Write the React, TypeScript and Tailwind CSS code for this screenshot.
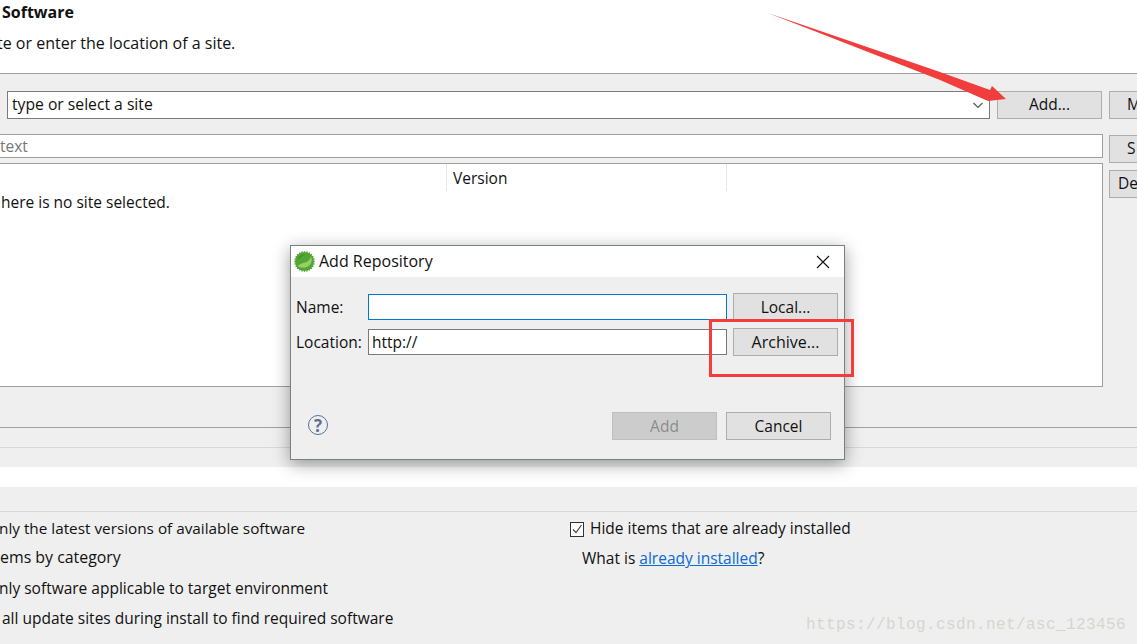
const font = "font-['Open_Sans','Noto_Sans',sans-serif]";

function Btn({ children, className = "" }: { children: React.ReactNode; className?: string }) {
  return (
    <div className={`h-[28px] shrink-0 flex items-center justify-center border border-[#adadad] bg-[#e1e1e1] text-[#111] whitespace-nowrap ${className}`}>
      {children}
    </div>
  );
}

function Logo() {
  const spikes = Array.from({ length: 24 }, (_, i) => i * 15);
  return (
    <svg width="21" height="21" viewBox="0 0 21 21">
      {spikes.map(a => (
        <rect key={a} x="9.8" y="0.200" width="1.400" height="3" fill="#4f9a34" transform={`rotate(${a} 10.5 10.5)`} />
      ))}
      <circle cx="10.5" cy="10.5" r="9.400" fill="#55a535" />
      <path d="M3.500 15c4 2.500 9.500 2.500 13-2 1.500-2 1.500-5 .5-7.500-1 3-3 5.500-6 6-3 .5-5 1.500-7.500 3.500z" fill="#93d263" />
      <path d="M3 9c1.500-3.500 5-6 9.500-6-3.500 1-6 3-9.500 6z" fill="#3f8a2a" />
    </svg>
  );
}

function Dialog() {
  return (
    <div className="absolute left-[290px] top-[245px] w-[555px] h-[215px] border border-[#76837a] bg-[#efefef] shadow-[0_4px_16px_rgba(0,0,0,0.38)] flex flex-col">
      <div className="h-[31px] bg-white flex items-center justify-between pl-[3px] pr-[13px]">
        <div className="flex items-center gap-[4px]">
          <Logo />
          <span className="text-[16px] pb-[2px]">Add Repository</span>
        </div>
        <svg width="16" height="16" viewBox="0 0 16 16" stroke="#111" strokeWidth="1.100" fill="none">
          <path d="M2 2l12 12M14 2L2 14" />
        </svg>
      </div>
      <div className="pt-[16px] pl-[5px] flex flex-col gap-[7px]">
        <div className="flex items-center">
          <span className="w-[72px] pt-[2px]">Name:</span>
          <div className="w-[359px] h-[26px] border border-[#0078d7] bg-white" />
          <Btn className="w-[105px] ml-[6px] pt-[2px]">Local...</Btn>
        </div>
        <div className="flex items-center">
          <span className="w-[72px] pt-[2px]">Location:</span>
          <div className="w-[359px] h-[26px] border border-[#7a7a7a] bg-white flex items-center pl-[3px] pt-[2px]">http://</div>
          <Btn className="w-[105px] ml-[6px] text-[16px]">Archive...</Btn>
        </div>
      </div>
      <div className="mt-[56px] flex items-center pl-[17px]">
        <div className="w-[20px] h-[20px] -mt-[2px] rounded-full border-[1.5px] border-[#5c6f96] flex items-center justify-center text-[17px] font-bold text-[#5c6f96] leading-none">?</div>
        <Btn className="w-[105px] ml-[284px] !bg-[#cccccc] !text-[#8c8c8c] !border-[#bfbfbf] pt-[1px]">Add</Btn>
        <Btn className="w-[105px] ml-[9px] pt-[1px]">Cancel</Btn>
      </div>
    </div>
  );
}

export default function App() {
  return (
    <div className={`relative w-[1137px] h-[644px] overflow-hidden bg-white text-[15.500px] text-[#111] ${font}`}>
      {/* header */}
      <div className="h-[73px] pt-[1px]">
        <div className="pl-[2px] font-bold text-[16px] leading-[22px]">Software</div>
        <div className="mt-[9px] -ml-[3px] text-[16px] leading-[22px]">te or enter the location of a site.</div>
      </div>

      {/* main panel */}
      <div className="h-[394px] bg-[#efefef] border-t border-[#a0a0a0] overflow-hidden">
        <div className="flex mt-[17px] pl-[7px] gap-[7px]">
          <div className="w-[983px] shrink-0 h-[28px] border border-[#7a7a7a] bg-white flex items-center justify-between pl-[4px] pr-[4px] pb-[1px]">
            <span className="text-[15.700px]">type or select a site</span>
            <svg width="14" height="14" viewBox="0 0 14 14" fill="none" stroke="#555" strokeWidth="1.100"><path d="M2.500 5l4.500 4.500L11.500 5" /></svg>
          </div>
          <Btn className="w-[105px]">Add...</Btn>
          <Btn className="w-[60px] !justify-start pl-[17px]">M</Btn>
        </div>
        <div className="flex mt-[15px]">
          <div className="w-[1103px] shrink-0 flex flex-col gap-[5px]">
            <div className="h-[24px] -ml-[2px] border border-[#a0a0a0] bg-white flex items-center text-[#777] pt-[2px]">
              <span className="ml-[1px]">text</span>
            </div>
            <div className="h-[224px] -ml-[2px] border border-[#a0a0a0] bg-white">
              <div className="flex h-[27px]">
                <div className="w-[448px] border-r border-[#e5e5e5]" />
                <div className="w-[280px] border-r border-[#e5e5e5] pl-[6px] pt-[2px] flex items-center">Version</div>
              </div>
              <div className="pl-[2px] leading-[23px]">here is no site selected.</div>
            </div>
          </div>
          <div className="ml-[6px] pt-[1px] flex flex-col gap-[7px]">
            <Btn className="w-[60px] !justify-start pl-[17px]">S</Btn>
            <Btn className="w-[60px] !justify-start pl-[8px]">De</Btn>
          </div>
        </div>
        <div className="mt-[40px] border-t border-[#a0a0a0]" />
        <div className="mt-[19px] border-t border-[#d8d8d8]" />
      </div>

      {/* white gap */}
      <div className="h-[20px] bg-white" />

      {/* options */}
      <div className="h-[157px] bg-[#efefef] pt-[24px]">
        <div className="border-t border-[#d8d8d8] pt-[2px] grid grid-cols-[570px_1fr] auto-rows-[30px] items-center">
          <div className="-ml-[1px] text-[15.300px] pb-[2px]">nly the latest versions of available software</div>
          <div className="flex items-center gap-[6px]">
            <div className="w-[14px] h-[15px] border border-[#333] bg-white flex items-center justify-center">
              <svg width="12" height="12" viewBox="0 0 12 12" fill="none" stroke="#444" strokeWidth="1.200"><path d="M2 6.500l3 3L10.500 2" /></svg>
            </div>
            <span>Hide items that are already installed</span>
          </div>
          <div className="text-[15.900px] pb-[2px]">ems by category</div>
          <div className="pl-[12px]">
            What is <a className="text-[#0a6ad6] underline">already installed</a>?
          </div>
          <div className="-ml-[1px]">nly software applicable to target environment</div>
          <div />
          <div className="pl-[2px]">all update sites during install to find required software</div>
          <div />
        </div>
      </div>

      <Dialog />

      {/* annotations */}
      <svg className="absolute left-0 top-0 pointer-events-none" width="1137" height="644">
        <polygon points="768,13 940,72 990,90 992,86 1006,99 988,101 940,80" fill="#f23d3d" />
      </svg>
      <div className="absolute left-[709px] top-[319px] w-[145px] h-[58px] border-[3px] border-[#f53b3b]" />
      <div className="absolute left-[806px] top-[613px] font-['Liberation_Mono',monospace] text-[16px] tracking-[0.4px] text-[#d6d6d0]">
        https://blog.csdn.net/asc_123456
      </div>
    </div>
  );
}
